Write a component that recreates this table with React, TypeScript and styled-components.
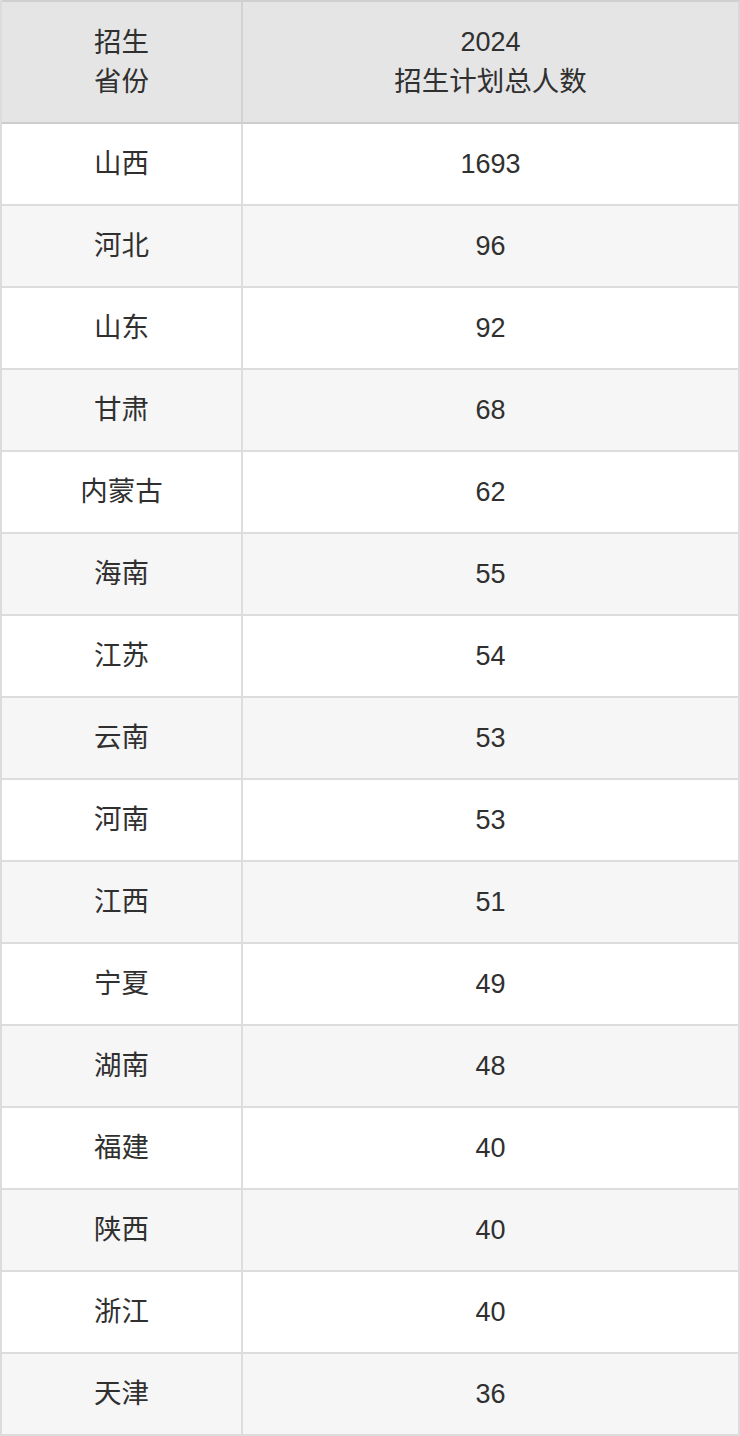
import React from "react";
import styled, { createGlobalStyle } from "styled-components";

const GlobalStyle = createGlobalStyle`
  html, body { margin: 0; padding: 0; background: #ffffff; }
  body { font-family: "Liberation Sans", "Noto Sans CJK SC", sans-serif; }
`;

const Table = styled.table`
  width: 740px;
  border-collapse: separate;
  border-spacing: 0;
  table-layout: fixed;
  font-family: "Liberation Sans", "Noto Sans CJK SC", sans-serif;
  font-size: 27px;
  color: #303030;
  border-left: 2px solid #dcdcdc;
`;

const HeadCell = styled.th<{ $last?: boolean }>`
  height: 120px;
  padding: 0;
  background: #e5e5e5;
  font-weight: normal;
  line-height: 39px;
  text-align: center;
  vertical-align: middle;
  border-top: 2px solid #cfcfcf;
  border-bottom: 2px solid #cdcdcd;
  border-right: 2px solid ${(p) => (p.$last ? "#d8d8d8" : "#d2d2d2")};
`;

const HeadLine = styled.span<{ $cjk?: boolean }>`
  display: block;
  font-size: ${(p) => (p.$cjk ? "27.5px" : "27px")};
`;

const Row = styled.tr<{ $alt: boolean }>`
  background: ${(p) => (p.$alt ? "#f6f6f6" : "#ffffff")};
`;

const Cell = styled.td<{ $cjk?: boolean }>`
  height: 80px;
  padding: 0;
  text-align: center;
  vertical-align: middle;
  line-height: 30px;
  font-size: ${(p) => (p.$cjk ? "27.5px" : "27px")};
  border-bottom: 2px solid #dddddd;
  border-right: 2px solid #dddddd;
`;

const data: [string, number][] = [
  ["山西", 1693],
  ["河北", 96],
  ["山东", 92],
  ["甘肃", 68],
  ["内蒙古", 62],
  ["海南", 55],
  ["江苏", 54],
  ["云南", 53],
  ["河南", 53],
  ["江西", 51],
  ["宁夏", 49],
  ["湖南", 48],
  ["福建", 40],
  ["陕西", 40],
  ["浙江", 40],
  ["天津", 36],
];

export default function App() {
  return (
    <>
      <GlobalStyle />
      <Table>
        <colgroup>
          <col style={{ width: 241 }} />
          <col />
        </colgroup>
        <thead>
          <tr>
            <HeadCell>
              <HeadLine $cjk>招生</HeadLine>
              <HeadLine $cjk>省份</HeadLine>
            </HeadCell>
            <HeadCell $last>
              <HeadLine>2024</HeadLine>
              <HeadLine $cjk>招生计划总人数</HeadLine>
            </HeadCell>
          </tr>
        </thead>
        <tbody>
          {data.map(([prov, n], i) => (
            <Row key={prov + i} $alt={i % 2 === 1}>
              <Cell $cjk>{prov}</Cell>
              <Cell>{n}</Cell>
            </Row>
          ))}
        </tbody>
      </Table>
    </>
  );
}
